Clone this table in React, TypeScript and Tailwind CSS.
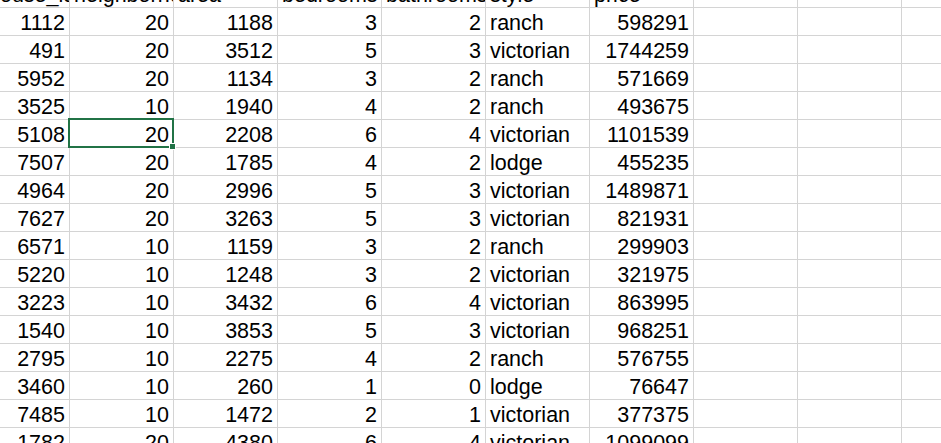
const headers = ['house_id', 'neighborhood', 'area', 'bedrooms', 'bathrooms', 'style', 'price'];

const rows: (string | number)[][] = [
  [1112, 20, 1188, 3, 2, 'ranch', 598291],
  [491, 20, 3512, 5, 3, 'victorian', 1744259],
  [5952, 20, 1134, 3, 2, 'ranch', 571669],
  [3525, 10, 1940, 4, 2, 'ranch', 493675],
  [5108, 20, 2208, 6, 4, 'victorian', 1101539],
  [7507, 20, 1785, 4, 2, 'lodge', 455235],
  [4964, 20, 2996, 5, 3, 'victorian', 1489871],
  [7627, 20, 3263, 5, 3, 'victorian', 821931],
  [6571, 10, 1159, 3, 2, 'ranch', 299903],
  [5220, 10, 1248, 3, 2, 'victorian', 321975],
  [3223, 10, 3432, 6, 4, 'victorian', 863995],
  [1540, 10, 3853, 5, 3, 'victorian', 968251],
  [2795, 10, 2275, 4, 2, 'ranch', 576755],
  [3460, 10, 260, 1, 0, 'lodge', 76647],
  [7485, 10, 1472, 2, 1, 'victorian', 377375],
  [1782, 20, 4380, 6, 4, 'victorian', 1099099],
];

const font = { fontFamily: '"Liberation Sans", Arial, sans-serif' };

function Cell({ value, first, selected }: { value?: string | number; first?: boolean; selected?: boolean }) {
  const isNum = typeof value === 'number';
  return (
    <div
      className={`relative h-[28px] shrink-0 border-r border-b border-[#d4d4d4] ${first ? 'w-[86px]' : 'w-[104px]'} ${
        selected ? 'z-10' : ''
      }`}
    >
      <div
        className={`h-full w-full overflow-hidden whitespace-nowrap px-[4px] pb-[1px] flex items-end text-[21.5px] leading-none text-black ${
          isNum ? 'justify-end' : 'justify-start'
        }`}
      >
        {value}
      </div>
      {selected && (
        <div className="absolute -left-[2px] -top-[2px] -right-[1px] -bottom-[1px] border-2 border-[#217346]">
          <div className="absolute -right-[4px] -bottom-[4px] w-[7px] h-[7px] bg-[#217346] border border-white" />
        </div>
      )}
    </div>
  );
}

export default function App() {
  return (
    <div className="w-[941px] h-[443px] overflow-hidden bg-white" style={font}>
      <div className="ml-[-16px] mt-[-20px]">
        <div className="flex">
          {headers.map((h, i) => (
            <Cell key={h} value={h} first={i === 0} />
          ))}
          <Cell />
          <Cell />
          <Cell />
        </div>
        {rows.map((r, ri) => (
          <div key={ri} className="flex">
            {r.map((v, ci) => (
              <Cell key={ci} value={v} first={ci === 0} selected={ri === 4 && ci === 1} />
            ))}
            <Cell />
            <Cell />
            <Cell />
          </div>
        ))}
      </div>
    </div>
  );
}
